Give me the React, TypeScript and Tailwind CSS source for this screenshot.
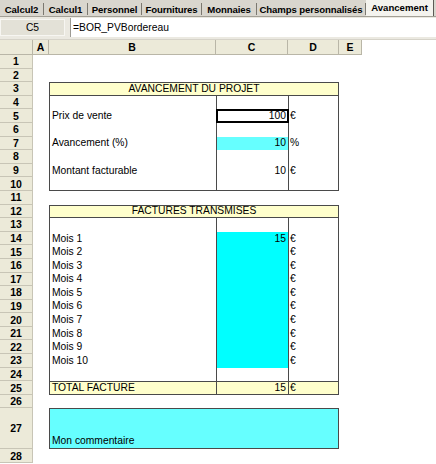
import React from "react";

const font = "font-['Liberation_Sans',Arial,sans-serif]";
const frame = "border-[#4a4a4a]";

const tabs = [
  { label: "Calcul2", w: "w-[44px]" },
  { label: "Calcul1", w: "w-[44px]" },
  { label: "Personnel", w: "w-[54px]" },
  { label: "Fournitures", w: "w-[60px]" },
  { label: "Monnaies", w: "w-[55px]" },
  { label: "Champs personnalisés", w: "w-[109px]" },
];

const cols = [
  { label: "A", w: "w-[16px]" },
  { label: "B", w: "w-[167px]" },
  { label: "C", w: "w-[72px]" },
  { label: "D", w: "w-[51px]" },
  { label: "E", w: "w-[23px]" },
];

type Kids = { children?: React.ReactNode; cls?: string };

function Row({ n, tall, children }: { n: number; tall?: boolean; children?: React.ReactNode }) {
  return (
    <div className={`flex ${tall ? "h-[40.8px]" : "h-[13.6px]"}`}>
      <div className="w-[33px] shrink-0 flex items-center justify-center bg-[#ecead9] border-r border-b border-[#c8c5b6] text-[10.5px] font-bold">
        {n}
      </div>
      <div className="w-[16px] shrink-0" />
      {children}
    </div>
  );
}

function B({ children, cls = "" }: Kids) {
  return (
    <div className={`w-[167px] shrink-0 border-l ${frame} flex items-center pl-[2px] ${cls}`}>{children}</div>
  );
}

function C({ children, cls = "" }: Kids) {
  return (
    <div className={`w-[72px] shrink-0 border-l ${frame} flex items-center justify-end pr-[2px] ${cls}`}>
      {children}
    </div>
  );
}

function D({ children, cls = "" }: Kids) {
  return (
    <div className={`w-[51px] shrink-0 border-l border-r ${frame} flex items-center pl-[1px] ${cls}`}>
      {children}
    </div>
  );
}

function Header({ title }: { title: string }) {
  return (
    <div className={`w-[290px] shrink-0 border ${frame} bg-[#ffffcc] flex items-center justify-center`}>
      {title}
    </div>
  );
}

export default function App() {
  const mois = Array.from({ length: 10 }, (_, i) => i + 1);

  return (
    <div className={`w-[436px] h-[464px] overflow-hidden bg-white text-black text-[10.3px] leading-[12px] ${font}`}>
      {/* Onglets */}
      <div className="flex h-[17px] bg-[#d9d6ce] border-b border-[#a29f96]">
        {tabs.map((t) => (
          <div key={t.label} className={`${t.w} shrink-0 flex items-center`}>
            <span className="flex-1 text-center text-[9.6px] font-bold leading-none pt-[3px] whitespace-nowrap tracking-[-0.1px]">
              {t.label}
            </span>
            <span className="w-px h-[12px] mt-[2px] bg-[#7b7870]" />
          </div>
        ))}
        <div className="w-[68px] shrink-0 flex items-center justify-center bg-[#f4f3ee] border-r border-[#5c5a55] text-[9.6px] font-bold leading-none">
          Avancement
        </div>
      </div>

      {/* Barre de formule */}
      <div className="flex items-start h-[23px] bg-[#ebe9e1] border-b border-[#d6d3c9]">
        <div className="mt-[2px] w-[65px] h-[17px] flex items-center justify-center bg-[#e3e1d7] border border-[#f7f6f2]">
          C5
        </div>
        <div className="ml-[5px] mt-[1px] flex-1 h-[19px] flex items-center bg-white border-l border-[#9c9a93] pl-[2px]">
          =BOR_PVBordereau
        </div>
      </div>

      {/* En-têtes de colonnes */}
      <div className="flex h-[15px] font-bold text-[10.5px]">
        <div className="w-[33px] shrink-0 bg-[#ecead9] border-r border-b border-[#b9b6a7]" />
        {cols.map((c) => (
          <div
            key={c.label}
            className={`${c.w} shrink-0 flex items-center justify-center bg-[#ecead9] border-r border-b border-[#b9b6a7]`}
          >
            {c.label}
          </div>
        ))}
      </div>

      {/* Feuille */}
      <Row n={1} />
      <Row n={2} />
      <Row n={3}>
        <Header title="AVANCEMENT DU PROJET" />
      </Row>
      <Row n={4}>
        <B />
        <C />
        <D />
      </Row>
      <Row n={5}>
        <B>Prix de vente</B>
        <div className="w-[73px] shrink-0 border-2 border-black flex items-center justify-end pr-[1px]">100</div>
        <div className={`w-[50px] shrink-0 border-r ${frame} flex items-center pl-[1px]`}>€</div>
      </Row>
      <Row n={6}>
        <B />
        <C />
        <D />
      </Row>
      <Row n={7}>
        <B>Avancement (%)</B>
        <C cls="bg-[#66ffff]">10</C>
        <D>%</D>
      </Row>
      <Row n={8}>
        <B />
        <C />
        <D />
      </Row>
      <Row n={9}>
        <B>Montant facturable</B>
        <C>10</C>
        <D>€</D>
      </Row>
      <Row n={10}>
        <B cls="border-b" />
        <C cls="border-b" />
        <D cls="border-b" />
      </Row>
      <Row n={11} />
      <Row n={12}>
        <Header title="FACTURES TRANSMISES" />
      </Row>
      <Row n={13}>
        <B />
        <C />
        <D />
      </Row>
      {mois.map((m) => (
        <Row key={m} n={13 + m}>
          <B>Mois {m}</B>
          <C cls="bg-[#00ffff]">{m === 1 ? "15" : ""}</C>
          <D>€</D>
        </Row>
      ))}
      <Row n={24}>
        <B />
        <C />
        <D />
      </Row>
      <Row n={25}>
        <B cls="border-t border-b bg-[#ffffcc]">TOTAL FACTURE</B>
        <C cls="border-t border-b bg-[#ffffcc]">15</C>
        <D cls="border-t border-b bg-[#ffffcc]">€</D>
      </Row>
      <Row n={26} />
      <Row n={27} tall>
        <div className={`w-[290px] shrink-0 border ${frame} bg-[#66ffff] flex items-end pl-[2px] pb-[1px]`}>
          Mon commentaire
        </div>
      </Row>
      <Row n={28} />
    </div>
  );
}
